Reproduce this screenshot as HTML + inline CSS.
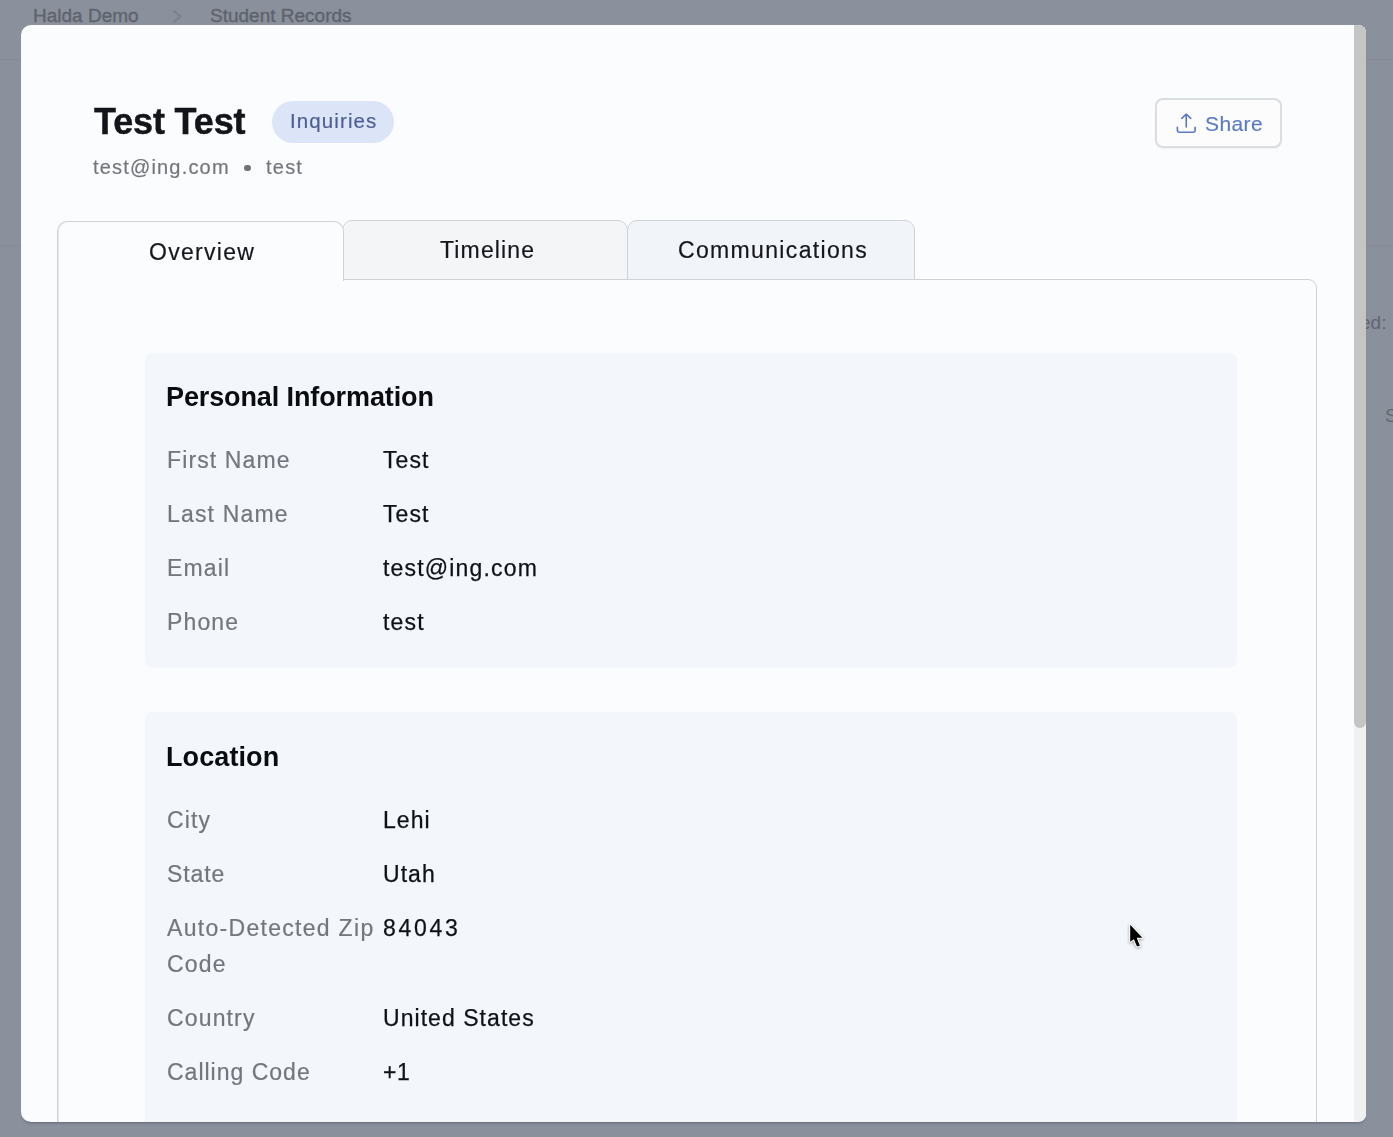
<!DOCTYPE html>
<html><head><meta charset="utf-8">
<style>
*{margin:0;padding:0;box-sizing:border-box}
html,body{width:1393px;height:1137px;overflow:hidden}
body{background:#8a909c;font-family:"Liberation Sans",sans-serif;position:relative}
.a{position:absolute}
.t{position:absolute;white-space:nowrap;line-height:1;will-change:transform}
.bg{position:absolute;white-space:nowrap;line-height:1;color:#5f636c;font-size:19px;-webkit-text-stroke:0.35px #5f636c}
.bgline{position:absolute;height:1px;background:#858a96}
#modal{position:absolute;left:21px;top:25px;width:1345px;height:1097px;background:#fbfcfd;border-radius:10px 8px 8px 10px;overflow:hidden;box-shadow:0 3px 3px -2px rgba(40,45,60,.4)}
</style></head><body>
<div class="bg" style="left:33px;top:6px">Halda Demo</div>
<svg class="a" style="left:168px;top:6px" width="20" height="20" viewBox="0 0 20 20"><path d="M6 5L12.5 10.5L6 16" fill="none" stroke="#7b808a" stroke-width="1.8" stroke-linecap="round" stroke-linejoin="round"/></svg>
<div class="bg" style="left:210px;top:6px">Student Records</div>
<div class="bgline" style="left:0;top:59px;width:1393px"></div>
<div class="bgline" style="left:0;top:245px;width:1393px"></div>
<div class="bg" style="left:1360px;top:312.5px;font-size:19px;-webkit-text-stroke:0;color:#62666f">ed:</div>
<div class="bg" style="left:1385px;top:405.5px;font-size:19px;-webkit-text-stroke:0;color:#656972">S</div>
<div id="modal">
<div class="t" id="title" style="left:73.0px;top:78.5px;font-size:36px;letter-spacing:-0.15px;color:#13151b;font-weight:700;-webkit-text-stroke:0.45px #13151b;">Test Test</div>
<div class="a" style="left:251px;top:75.5px;width:122px;height:42px;border-radius:21px;background:#dbe5f7"></div>
<div class="t" id="badgeT" style="left:268.6px;top:86.3px;font-size:20.5px;letter-spacing:1.1px;color:#4e5e94;font-weight:400;-webkit-text-stroke:0.2px #4e5e94;">Inquiries</div>
<div class="t" id="sub" style="left:72.3px;top:131.8px;font-size:20px;letter-spacing:1.18px;color:#72767d;font-weight:400;-webkit-text-stroke:0.2px #72767d;">test@ing.com</div>
<div class="a" style="left:223.1px;top:139.5px;width:6.6px;height:6.6px;border-radius:50%;background:#6f7279"></div>
<div class="t" id="sub2" style="left:245.0px;top:131.8px;font-size:20px;letter-spacing:1.23px;color:#72767d;font-weight:400;-webkit-text-stroke:0.2px #72767d;">test</div>
<div class="a" style="left:1134px;top:72.5px;width:126.5px;height:50.5px;border:2px solid #dadde1;border-radius:8px;background:#fcfcfd;box-shadow:0 1px 2px rgba(0,0,0,.05)"></div>
<svg class="a" style="left:1154px;top:87px" width="24" height="24" viewBox="0 0 24 24" fill="none" stroke="#5a7bc4" stroke-width="1.65" stroke-linecap="round" stroke-linejoin="round"><path d="M11.25 15V2M6.8 6.4L11.25 2L15.7 6.4M2.4 15.2V18.6Q2.4 20.2 4 20.2H18.5Q20.1 20.2 20.1 18.6V15.2"/></svg>
<div class="t" id="shareT" style="left:1184.0px;top:87.6px;font-size:21px;letter-spacing:0.38px;color:#5a7bc4;font-weight:400;-webkit-text-stroke:0.15px #5a7bc4;">Share</div>
<div class="a" style="left:36px;top:254px;width:1260px;height:900px;border:1.5px solid #cfd2d7;border-radius:0 9px 0 0;box-shadow:inset 1px 0 0 #e3e5e8"></div>
<div class="a" style="left:321px;top:195px;width:286px;height:59.5px;background:#f4f5f7;border:1.5px solid #cfd2d7;border-radius:10px 10px 0 0"></div>
<div class="a" style="left:606px;top:195px;width:288px;height:59.5px;background:#f1f4f8;border:1.5px solid #cfd2d7;border-radius:10px 10px 0 0"></div>
<div class="a" style="left:36px;top:196px;width:286.5px;height:60px;background:#fbfcfd;border:1.5px solid #cfd2d7;border-bottom:none;border-radius:10px 10px 0 0;box-shadow:inset 1px 0 0 #e3e5e8"></div>
<div class="t" id="tab1" style="left:128.2px;top:215.5px;font-size:23px;letter-spacing:1.29px;color:#15171c;font-weight:400;-webkit-text-stroke:0.2px #15171c;">Overview</div>
<div class="t" id="tab2" style="left:418.8px;top:214.0px;font-size:23px;letter-spacing:1.14px;color:#15171c;font-weight:400;-webkit-text-stroke:0.2px #15171c;">Timeline</div>
<div class="t" id="tab3" style="left:656.8px;top:214.1px;font-size:23px;letter-spacing:1.34px;color:#15171c;font-weight:400;-webkit-text-stroke:0.2px #15171c;">Communications</div>
<div class="a" style="left:124px;top:328px;width:1092px;height:315px;background:#f3f6fa;border-radius:7px"></div>
<div class="a" style="left:124px;top:687px;width:1092px;height:520px;background:#f3f6fa;border-radius:7px"></div>
<div class="t" id="h1" style="left:145.4px;top:358.8px;font-size:27px;letter-spacing:-0.11px;color:#0b0c0f;font-weight:700;">Personal Information</div>
<div class="t" style="left:146.2px;top:424.0px;font-size:23px;letter-spacing:1.11px;color:#72767d;font-weight:400;-webkit-text-stroke:0.2px #72767d;">First Name</div>
<div class="t" style="left:361.7px;top:424.0px;font-size:23px;letter-spacing:1.1px;color:#0f1115;font-weight:400;-webkit-text-stroke:0.25px #0f1115;">Test</div>
<div class="t" style="left:146.2px;top:477.9px;font-size:23px;letter-spacing:1.16px;color:#72767d;font-weight:400;-webkit-text-stroke:0.2px #72767d;">Last Name</div>
<div class="t" style="left:361.7px;top:477.9px;font-size:23px;letter-spacing:1.1px;color:#0f1115;font-weight:400;-webkit-text-stroke:0.25px #0f1115;">Test</div>
<div class="t" style="left:146.2px;top:532.0px;font-size:23px;letter-spacing:1.15px;color:#72767d;font-weight:400;-webkit-text-stroke:0.2px #72767d;">Email</div>
<div class="t" style="left:361.7px;top:532.0px;font-size:23px;letter-spacing:1.18px;color:#0f1115;font-weight:400;-webkit-text-stroke:0.25px #0f1115;">test@ing.com</div>
<div class="t" style="left:146.2px;top:586.0px;font-size:23px;letter-spacing:1.15px;color:#72767d;font-weight:400;-webkit-text-stroke:0.2px #72767d;">Phone</div>
<div class="t" style="left:361.7px;top:586.0px;font-size:23px;letter-spacing:1.18px;color:#0f1115;font-weight:400;-webkit-text-stroke:0.25px #0f1115;">test</div>
<div class="t" id="h2" style="left:145.4px;top:718.5px;font-size:27px;letter-spacing:0.1px;color:#0b0c0f;font-weight:700;">Location</div>
<div class="t" style="left:146.2px;top:783.9px;font-size:23px;letter-spacing:1.15px;color:#72767d;font-weight:400;-webkit-text-stroke:0.2px #72767d;">City</div>
<div class="t" style="left:361.7px;top:783.9px;font-size:23px;letter-spacing:1.05px;color:#0f1115;font-weight:400;-webkit-text-stroke:0.25px #0f1115;">Lehi</div>
<div class="t" style="left:146.2px;top:837.8px;font-size:23px;letter-spacing:0.9px;color:#72767d;font-weight:400;-webkit-text-stroke:0.2px #72767d;">State</div>
<div class="t" style="left:361.7px;top:837.8px;font-size:23px;letter-spacing:1.05px;color:#0f1115;font-weight:400;-webkit-text-stroke:0.25px #0f1115;">Utah</div>
<div class="t" style="left:146.2px;top:891.7px;font-size:23px;letter-spacing:1.3px;color:#72767d;font-weight:400;-webkit-text-stroke:0.2px #72767d;">Auto-Detected Zip</div>
<div class="t" style="left:361.7px;top:891.7px;font-size:23px;letter-spacing:2.7px;color:#0f1115;font-weight:400;-webkit-text-stroke:0.25px #0f1115;">84043</div>
<div class="t" style="left:146.2px;top:981.9px;font-size:23px;letter-spacing:1.15px;color:#72767d;font-weight:400;-webkit-text-stroke:0.2px #72767d;">Country</div>
<div class="t" style="left:361.7px;top:981.9px;font-size:23px;letter-spacing:1.05px;color:#0f1115;font-weight:400;-webkit-text-stroke:0.25px #0f1115;">United States</div>
<div class="t" style="left:146.2px;top:1035.6px;font-size:23px;letter-spacing:1.0px;color:#72767d;font-weight:400;-webkit-text-stroke:0.2px #72767d;">Calling Code</div>
<div class="t" style="left:361.7px;top:1035.6px;font-size:23px;letter-spacing:0.6px;color:#0f1115;font-weight:400;-webkit-text-stroke:0.25px #0f1115;">+1</div>
<div class="t" style="left:146.2px;top:927.6px;font-size:23px;letter-spacing:1.15px;color:#72767d;font-weight:400;-webkit-text-stroke:0.2px #72767d;">Code</div>
<div class="a" style="left:1333px;top:0;width:12px;height:1096px;background:#f1f1f1"></div>
<div class="a" style="left:1333px;top:0;width:12px;height:703px;background:#c5c5c6;border-radius:0 0 6px 6px"></div>
</div>
<svg class="a" style="left:1120px;top:915px;filter:drop-shadow(0 1px 1.5px rgba(0,0,0,.35))" width="40" height="40" viewBox="0 0 40 40"><path d="M10.2 9.7V26.8L13.9 24.2L17.0 31.6L19.9 30.8L16.7 22.8H22.4Z" fill="#000" stroke="#fff" stroke-width="2" stroke-linejoin="round" paint-order="stroke fill"/></svg>
</body></html>
